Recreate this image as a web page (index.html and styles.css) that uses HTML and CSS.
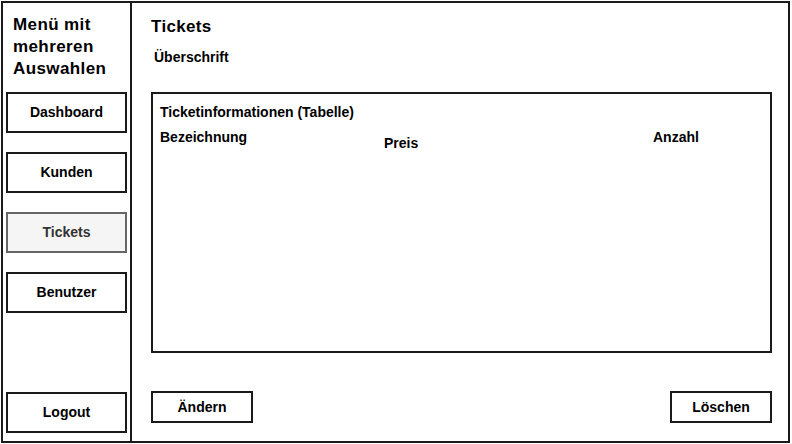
FILE: index.html
```html
<!DOCTYPE html>
<html lang="de">
<head>
<meta charset="utf-8">
<title>Tickets</title>
<link rel="stylesheet" href="styles.css">
</head>
<body>
<div class="frame">
  <aside class="sidebar">
    <div class="menu-title">Menü mit<br>mehreren<br>Auswahlen</div>
    <nav class="menu">
      <div class="nav-btn">Dashboard</div>
      <div class="nav-btn">Kunden</div>
      <div class="nav-btn active">Tickets</div>
      <div class="nav-btn">Benutzer</div>
    </nav>
    <div class="nav-btn logout">Logout</div>
  </aside>
  <main class="content">
    <h1 class="page-title">Tickets</h1>
    <div class="subtitle">Überschrift</div>
    <section class="table-box">
      <div class="table-title">Ticketinformationen (Tabelle)</div>
      <div class="table-head">
        <span>Bezeichnung</span>
        <span class="col-preis">Preis</span>
        <span>Anzahl</span>
      </div>
    </section>
    <div class="actions">
      <div class="action-btn">Ändern</div>
      <div class="action-btn">Löschen</div>
    </div>
  </main>
</div>
</body>
</html>
```
FILE: styles.css
```css
* {
  box-sizing: border-box;
}

html, body {
  margin: 0;
  padding: 0;
  background: #ffffff;
}

body {
  font-family: "Liberation Sans", Arial, Helvetica, sans-serif;
  color: #000;
}

.frame {
  margin: 1px 0 0 1px;
  width: 789px;
  height: 442px;
  border: 2px solid #1a1a1a;
  display: flex;
}

.sidebar {
  width: 129px;
  border-right: 2px solid #1a1a1a;
  display: flex;
  flex-direction: column;
  padding: 0 0 8px 3px;
}

.menu-title {
  font-size: 17px;
  font-weight: bold;
  line-height: 22px;
  letter-spacing: 0.4px;
  padding: 11px 0 0 7px;
  height: 89px;
}

.menu {
  display: flex;
  flex-direction: column;
  gap: 19px;
}

.nav-btn {
  width: 121px;
  height: 41px;
  border: 2px solid #1a1a1a;
  display: flex;
  align-items: center;
  justify-content: center;
  padding-bottom: 1px;
  font-size: 14px;
  font-weight: bold;
  background: #fff;
}

.nav-btn.active {
  background: #f5f5f5;
  border-color: #666666;
  color: #333333;
}

.nav-btn.logout {
  margin-top: auto;
}

.content {
  flex: 1;
  display: flex;
  flex-direction: column;
  padding: 13px 16px 18px 19px;
}

.page-title {
  margin: 0;
  font-size: 17px;
  font-weight: bold;
  line-height: 22px;
  letter-spacing: 0.3px;
}

.subtitle {
  margin: 11px 0 0 3px;
  font-size: 14px;
  font-weight: bold;
  line-height: 16px;
}

.table-box {
  margin-top: 27px;
  flex: 1;
  border: 2px solid #1a1a1a;
  padding: 10px 7px;
}

.table-title {
  font-size: 14px;
  font-weight: bold;
  line-height: 16px;
}

.table-head {
  margin-top: 9px;
  display: grid;
  grid-template-columns: 224px 269px auto;
  font-size: 14px;
  font-weight: bold;
  line-height: 16px;
}

.col-preis {
  margin-top: 6px;
}

.actions {
  margin-top: 38px;
  display: flex;
  justify-content: space-between;
}

.action-btn {
  width: 102px;
  height: 32px;
  border: 2px solid #1a1a1a;
  display: flex;
  align-items: center;
  justify-content: center;
  font-size: 14px;
  font-weight: bold;
}
```
